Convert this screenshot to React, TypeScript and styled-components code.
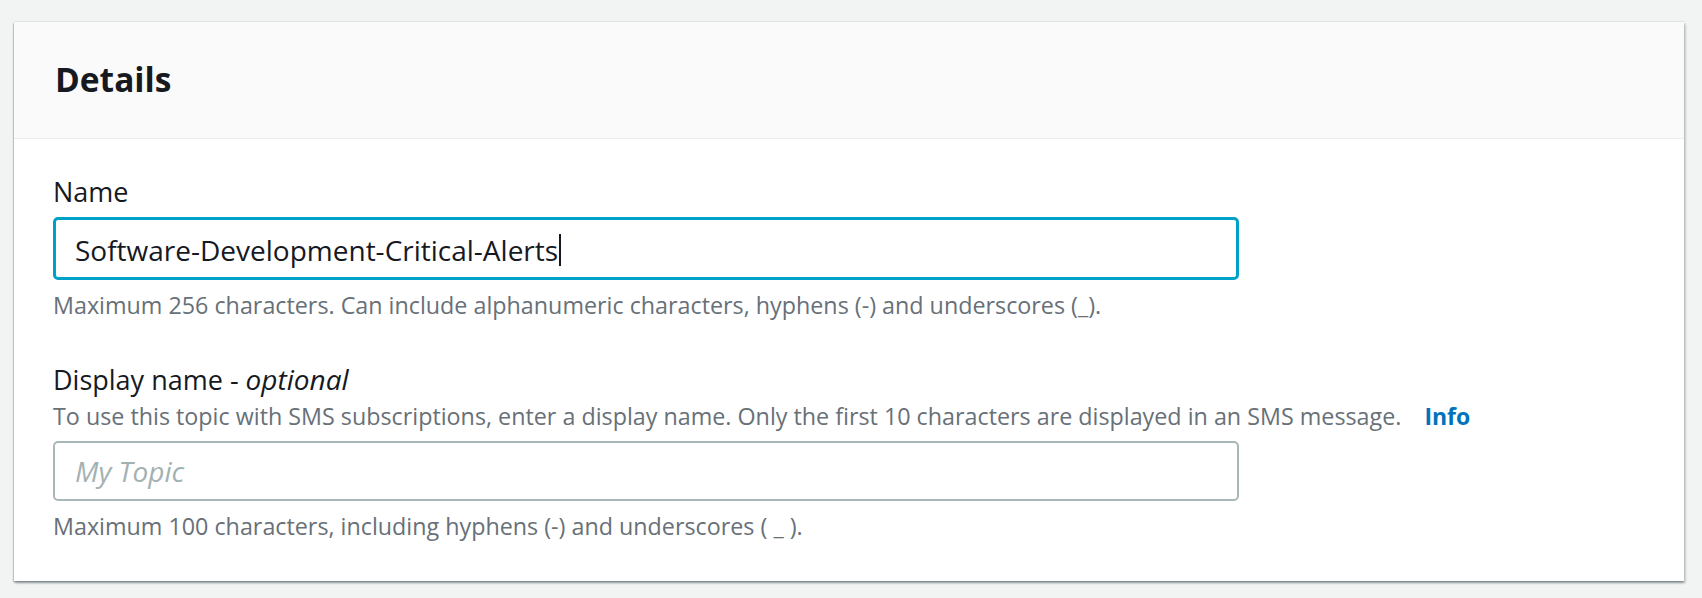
import { FC, ReactNode } from "react";
import styled, { createGlobalStyle } from "styled-components";

const GlobalStyle = createGlobalStyle`
  html, body {
    margin: 0;
    padding: 0;
    background-color: #f2f3f3;
  }
  body {
    font-family: "Open Sans", "Noto Sans", Arial, sans-serif;
    color: #16191f;
  }
`;

const Styles = {
  Page: styled.div`
    padding: 22px 18px 18px 14px;
  `,
  Card: styled.section`
    display: flex;
    flex-direction: column;
    background-color: #ffffff;
    box-shadow: 0 2px 2px 0 rgba(0, 28, 36, 0.3),
      2px 2px 2px 0 rgba(0, 28, 36, 0.15), -1px 1px 1px 0 rgba(0, 28, 36, 0.12),
      0 -1px 1px 0 rgba(0, 28, 36, 0.06);
  `,
  Header: styled.header`
    display: flex;
    align-items: center;
    height: 116px;
    padding: 0 41px;
    background-color: #fafafa;
    border-bottom: 1px solid #eaeded;
  `,
  Title: styled.h2`
    margin: 0;
    font-size: 33.5px;
    line-height: 1;
    font-weight: 700;
    color: #16191f;
  `,
  Body: styled.div`
    display: flex;
    flex-direction: column;
    padding: 35px 39px 40px;
  `,
  Field: styled.div<{ $spaced?: boolean }>`
    display: flex;
    flex-direction: column;
    margin-top: ${({ $spaced }) => ($spaced ? "41px" : "0")};
  `,
  Label: styled.label`
    font-size: 27px;
    line-height: 36px;
    color: #16191f;
    em {
      font-style: italic;
      font-size: 28px;
    }
  `,
  Description: styled.div`
    display: flex;
    align-items: baseline;
    margin-top: 3px;
    font-size: 23.3px;
    line-height: 30px;
    color: #687078;
  `,
  InfoLink: styled.a`
    margin-left: 23px;
    font-size: 23px;
    font-weight: 700;
    color: #0073bb;
    text-decoration: none;
    cursor: pointer;
  `,
  InputBox: styled.div<{ $focused?: boolean }>`
    box-sizing: border-box;
    display: flex;
    align-items: center;
    width: 1186px;
    height: ${({ $focused }) => ($focused ? "63px" : "60px")};
    margin-top: ${({ $focused }) => ($focused ? "7px" : "10px")};
    padding: 0 ${({ $focused }) => ($focused ? "19px" : "20px")};
    border: ${({ $focused }) =>
      $focused ? "3px solid #00a1c9" : "2px solid #aab7b8"};
    border-radius: 5px;
    background-color: #ffffff;
    font-size: 28px;
    color: #16191f;
  `,
  Value: styled.span`
    padding-top: 2px;
  `,
  Caret: styled.span`
    display: inline-block;
    width: 2px;
    height: 32px;
    margin-left: 1px;
    margin-top: 3px;
    background-color: #16191f;
  `,
  Placeholder: styled.span`
    font-style: italic;
    color: #a3b1b3;
    font-size: 28px;
  `,
  Hint: styled.div`
    margin-top: 10px;
    font-size: 23.3px;
    line-height: 30px;
    color: #687078;
  `,
};

interface FieldProps {
  label: ReactNode;
  description?: ReactNode;
  hint: string;
  spaced?: boolean;
  children: ReactNode;
}

const FormField: FC<FieldProps> = ({ label, description, hint, spaced, children }) => {
  return (
    <Styles.Field $spaced={spaced}>
      <Styles.Label>{label}</Styles.Label>
      {description && <Styles.Description>{description}</Styles.Description>}
      {children}
      <Styles.Hint>{hint}</Styles.Hint>
    </Styles.Field>
  );
};

const App: FC = () => {
  return (
    <>
      <GlobalStyle />
      <Styles.Page>
        <Styles.Card>
          <Styles.Header>
            <Styles.Title>Details</Styles.Title>
          </Styles.Header>
          <Styles.Body>
            <FormField
              label="Name"
              hint="Maximum 256 characters. Can include alphanumeric characters, hyphens (-) and underscores (_)."
            >
              <Styles.InputBox $focused>
                <Styles.Value>Software-Development-Critical-Alerts</Styles.Value>
                <Styles.Caret />
              </Styles.InputBox>
            </FormField>
            <FormField
              spaced
              label={
                <>
                  Display name - <em>optional</em>
                </>
              }
              description={
                <>
                  <span>
                    To use this topic with SMS subscriptions, enter a display name. Only the
                    first 10 characters are displayed in an SMS message.
                  </span>
                  <Styles.InfoLink>Info</Styles.InfoLink>
                </>
              }
              hint="Maximum 100 characters, including hyphens (-) and underscores ( _ )."
            >
              <Styles.InputBox>
                <Styles.Placeholder>My Topic</Styles.Placeholder>
              </Styles.InputBox>
            </FormField>
          </Styles.Body>
        </Styles.Card>
      </Styles.Page>
    </>
  );
};

export default App;
